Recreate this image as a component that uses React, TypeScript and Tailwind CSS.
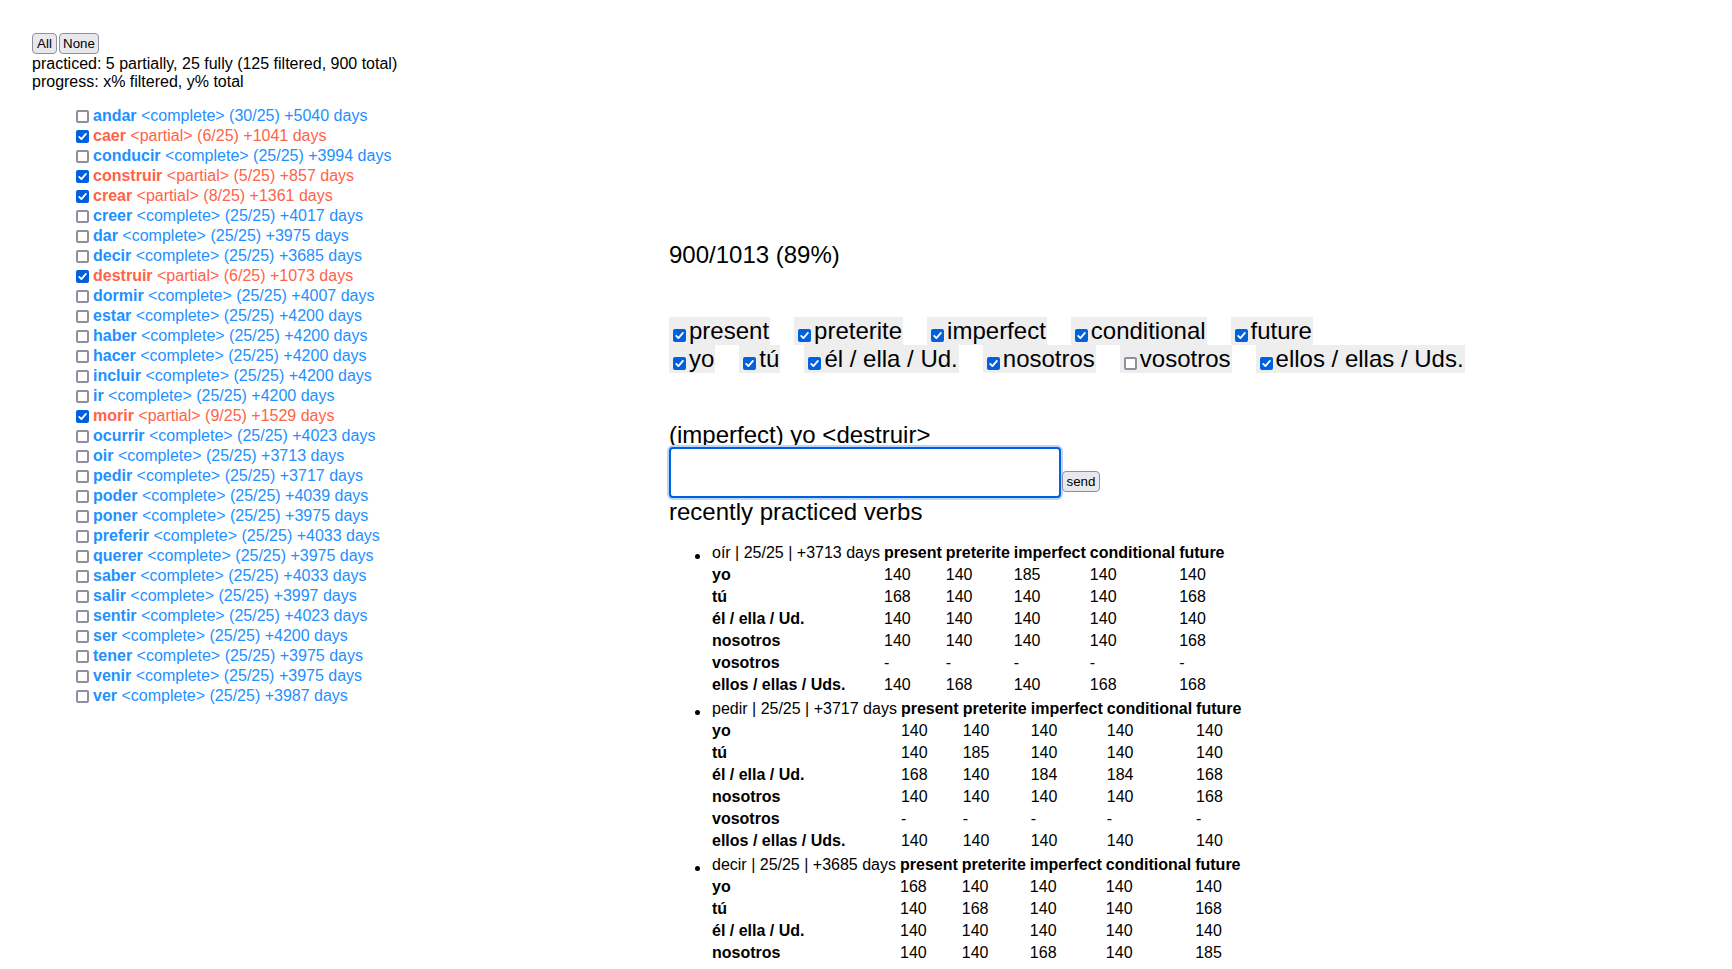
const verbs = [
  { name: 'andar', done: 30, days: 5040 },
  { name: 'caer', done: 6, days: 1041, partial: true },
  { name: 'conducir', done: 25, days: 3994 },
  { name: 'construir', done: 5, days: 857, partial: true },
  { name: 'crear', done: 8, days: 1361, partial: true },
  { name: 'creer', done: 25, days: 4017 },
  { name: 'dar', done: 25, days: 3975 },
  { name: 'decir', done: 25, days: 3685 },
  { name: 'destruir', done: 6, days: 1073, partial: true },
  { name: 'dormir', done: 25, days: 4007 },
  { name: 'estar', done: 25, days: 4200 },
  { name: 'haber', done: 25, days: 4200 },
  { name: 'hacer', done: 25, days: 4200 },
  { name: 'incluir', done: 25, days: 4200 },
  { name: 'ir', done: 25, days: 4200 },
  { name: 'morir', done: 9, days: 1529, partial: true },
  { name: 'ocurrir', done: 25, days: 4023 },
  { name: 'oir', done: 25, days: 3713 },
  { name: 'pedir', done: 25, days: 3717 },
  { name: 'poder', done: 25, days: 4039 },
  { name: 'poner', done: 25, days: 3975 },
  { name: 'preferir', done: 25, days: 4033 },
  { name: 'querer', done: 25, days: 3975 },
  { name: 'saber', done: 25, days: 4033 },
  { name: 'salir', done: 25, days: 3997 },
  { name: 'sentir', done: 25, days: 4023 },
  { name: 'ser', done: 25, days: 4200 },
  { name: 'tener', done: 25, days: 3975 },
  { name: 'venir', done: 25, days: 3975 },
  { name: 'ver', done: 25, days: 3987 },
]

const tenses = ['present', 'preterite', 'imperfect', 'conditional', 'future']
const persons = [
  { label: 'yo', on: true },
  { label: 'tú', on: true },
  { label: 'él / ella / Ud.', on: true },
  { label: 'nosotros', on: true },
  { label: 'vosotros', on: false },
  { label: 'ellos / ellas / Uds.', on: true },
]

const recent = [
  {
    info: 'oír | 25/25 | +3713 days',
    rows: [
      ['140', '140', '185', '140', '140'],
      ['168', '140', '140', '140', '168'],
      ['140', '140', '140', '140', '140'],
      ['140', '140', '140', '140', '168'],
      ['-', '-', '-', '-', '-'],
      ['140', '168', '140', '168', '168'],
    ],
  },
  {
    info: 'pedir | 25/25 | +3717 days',
    rows: [
      ['140', '140', '140', '140', '140'],
      ['140', '185', '140', '140', '140'],
      ['168', '140', '184', '184', '168'],
      ['140', '140', '140', '140', '168'],
      ['-', '-', '-', '-', '-'],
      ['140', '140', '140', '140', '140'],
    ],
  },
  {
    info: 'decir | 25/25 | +3685 days',
    rows: [
      ['168', '140', '140', '140', '140'],
      ['140', '168', '140', '140', '168'],
      ['140', '140', '140', '140', '140'],
      ['140', '140', '168', '140', '185'],
      ['-', '-', '-', '-', '-'],
      ['140', '140', '140', '168', '140'],
    ],
  },
]

function Box({ checked }: { checked: boolean }) {
  if (!checked) {
    return <span className="block h-[13px] w-[13px] shrink-0 rounded-[2px] border-2 border-[#8f8f9d] bg-white" />
  }
  return (
    <span className="flex h-[13px] w-[13px] shrink-0 items-center justify-center rounded-[2px] bg-[#0060df]">
      <svg viewBox="0 0 13 13" className="h-[13px] w-[13px]">
        <path d="M3.2 6.9 5.4 9.1 9.9 3.9" fill="none" stroke="white" strokeWidth="1.8" strokeLinecap="round" strokeLinejoin="round" />
      </svg>
    </span>
  )
}

function Toggle({ label, checked }: { label: string; checked: boolean }) {
  return (
    <label className="flex h-[28px] items-end bg-[#eeeeee] pr-px">
      <span className="mb-[3px] ml-1 mr-[3px]">
        <Box checked={checked} />
      </span>
      <span className="leading-[28px]">{label}</span>
    </label>
  )
}

const buttonClass =
  'h-[21px] rounded-[4px] border border-[#8f8f9d] bg-[#e9e9ed] text-[13.33px] leading-none text-black'

export default function App() {
  return (
    <div className="flex bg-white p-8 font-['Liberation_Sans',Arial,sans-serif] text-[16px] text-black">
      <div className="w-[637px] shrink-0">
        <div className="flex h-[23px] pt-px">
          <button className={`${buttonClass} w-[25px]`}>All</button>
          <button className={`${buttonClass} ml-0.5 w-[40px]`}>None</button>
        </div>
        <div className="leading-[18.4px]">practiced: 5 partially, 25 fully (125 filtered, 900 total)</div>
        <div className="leading-[18.4px]">progress: x% filtered, y% total</div>

        <ul className="mt-[15px] pl-10">
          {verbs.map((v) => (
            <li
              key={v.name}
              className={`flex h-5 items-start ${v.partial ? 'text-[#ff6347]' : 'text-[#1e90ff]'}`}
            >
              <span className="ml-1 mr-[4px] mt-[3px]">
                <Box checked={!!v.partial} />
              </span>
              <span className="whitespace-nowrap leading-[18px]">
                <span className="font-bold">{v.name}</span>
                {` <${v.partial ? 'partial' : 'complete'}> (${v.done}/25) +${v.days} days`}
              </span>
            </li>
          ))}
        </ul>
      </div>

      <div className="mt-[209px] flex flex-1 flex-col">
        <div className="text-[24px] leading-[28px]">900/1013 (89%)</div>

        <div className="mt-[48px] text-[24px]">
          <div className="flex gap-6">
            {tenses.map((t) => (
              <Toggle key={t} label={t} checked />
            ))}
          </div>
          <div className="flex gap-6">
            {persons.map((p) => (
              <Toggle key={p.label} label={p.label} checked={p.on} />
            ))}
          </div>
        </div>

        <div className="mt-[48px] text-[24px] leading-[28px]">(imperfect) yo &lt;destruir&gt;</div>
        <div className="-mt-[2px] flex items-end">
          <input
            type="text"
            className="h-[51px] w-[392px] rounded-[4px] border-2 border-[#0060df] bg-white px-1 text-[24px] shadow-[0_0_0_2px_#bcd6f7] outline-none"
          />
          <button className={`${buttonClass} mb-[6px] ml-px w-[38px]`}>send</button>
        </div>
        <div className="text-[24px] leading-[28px]">recently practiced verbs</div>

        <ul className="mt-[15px]">
          {recent.map((r) => (
            <li key={r.info} className="flex items-start">
              <span className="w-[40px] shrink-0">
                <span className="ml-[26px] mt-[13px] block h-[5px] w-[5px] rounded-full bg-black" />
              </span>
              <table className="border-separate border-spacing-[2px] leading-[18px]">
                <tbody>
                  <tr>
                    <td className="whitespace-nowrap p-px text-left">{r.info}</td>
                    {tenses.map((t) => (
                      <th key={t} className="p-px text-center font-bold">
                        {t}
                      </th>
                    ))}
                  </tr>
                  {r.rows.map((row, i) => (
                    <tr key={persons[i].label}>
                      <td className="whitespace-nowrap p-px text-left font-bold">{persons[i].label}</td>
                      {row.map((n, j) => (
                        <td key={j} className="p-px text-left">
                          {n}
                        </td>
                      ))}
                    </tr>
                  ))}
                </tbody>
              </table>
            </li>
          ))}
        </ul>
      </div>
    </div>
  )
}
